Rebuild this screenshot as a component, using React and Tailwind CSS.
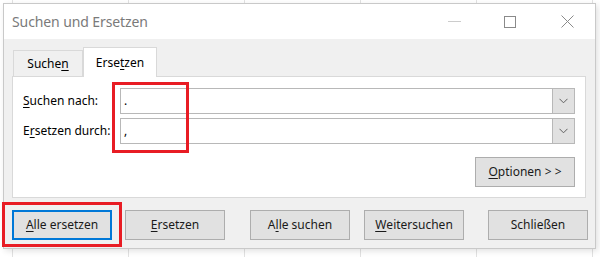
import React from 'react';

const font = { fontFamily: '"Segoe UI", "Noto Sans", "Open Sans", sans-serif' };

const U = ({ children }) => <span className="underline underline-offset-2">{children}</span>;

const Btn = ({ children, className = '' }) => (
    <button
        className={`h-[30px] w-[100px] bg-[#e1e1e1] border border-[#adadad] text-[12px] text-[#1a1a1a] flex items-center justify-center ${className}`}
    >
        {children}
    </button>
);

const Chevron = () => (
    <svg width="9" height="6" viewBox="0 0 9 6">
        <polyline points="0.5,0.8 4.5,4.8 8.5,0.8" fill="none" stroke="#606060" strokeWidth="1" />
    </svg>
);

const Combo = ({ value }) => (
    <div className="flex-1 h-full flex bg-white border border-[#b8b8b8]">
        <div className="flex-1 pl-[3px] text-[12px] leading-[24px] text-black">{value}</div>
        <div className="w-[22px] h-full bg-[#e1e1e1] border-l border-[#b8b8b8] flex items-center justify-center">
            <Chevron />
        </div>
    </div>
);

const App = () => {
    return (
        <div
            className="relative w-[600px] h-[257px] bg-white bg-[linear-gradient(90deg,#e2e2e2_1px,transparent_1px)] bg-[length:116px_100%] bg-[position:12px_0] pl-[3px] pt-[3px] overflow-hidden"
            style={font}
        >
            <div className="w-[593px] h-[246px] flex flex-col border border-[#c9c9c9] shadow-[2px_2px_6px_rgba(0,0,0,0.12)]">
                {/* title bar */}
                <div className="h-[35px] bg-white flex items-center">
                    <div className="pl-[8px] text-[14px] tracking-[-0.1px] text-[#7a7a7a] flex-1">Suchen und Ersetzen</div>
                    <div className="w-[13px] h-px bg-[#cccccc] mr-[43px]" />
                    <div className="w-[12px] h-[12px] border border-[#8a8a8a] mr-[45px]" />
                    <svg width="13" height="13" viewBox="0 0 13 13" className="mr-[21px]">
                        <path d="M0.5 0.5 L12.5 12.5 M12.5 0.5 L0.5 12.5" stroke="#8a8a8a" strokeWidth="1" />
                    </svg>
                </div>

                {/* body */}
                <div className="flex-1 bg-[#f0f0f0] pl-[8px] pt-[8px]">
                    <div className="flex items-end h-[29px] pl-[1px]">
                        <div className="w-[70px] h-[26px] border border-b-0 border-[#d9d9d9] flex items-center justify-center text-[12px] text-black">
                            Suche<U>n</U>
                        </div>
                        <div className="w-[74px] h-[30px] -mb-px bg-white border border-b-0 border-[#d9d9d9] flex items-center justify-center text-[12px] text-black relative z-10">
                            Erse<U>t</U>zen
                        </div>
                    </div>
                    <div className="w-[574px] h-[122px] bg-white border border-[#d9d9d9] pl-[10px] pr-[10px] pt-[11px] flex flex-col">
                        <div className="flex items-center h-[26px]">
                            <div className="w-[97px] text-[12px] text-black"><U>S</U>uchen nach:</div>
                            <Combo value="." />
                        </div>
                        <div className="flex items-center h-[26px] mt-[4px]">
                            <div className="w-[97px] text-[12px] text-black">E<U>r</U>setzen durch:</div>
                            <Combo value="," />
                        </div>
                        <div className="flex justify-end mt-[13px]">
                            <Btn className="h-[29px]"><U>O</U>ptionen &gt; &gt;</Btn>
                        </div>
                    </div>

                    <div className="flex mt-[12px]">
                        <button className="h-[30px] w-[100px] bg-[#e1e1e1] border-2 border-[#0078d7] text-[12px] text-[#1a1a1a] flex items-center justify-center">
                            <U>A</U>lle ersetzen
                        </button>
                        <Btn className="ml-[13px]"><U>E</U>rsetzen</Btn>
                        <Btn className="ml-[25px]">A<U>l</U>le suchen</Btn>
                        <Btn className="ml-[14px]"><U>W</U>eitersuchen</Btn>
                        <Btn className="ml-[24px]">Schließen</Btn>
                    </div>
                </div>
            </div>

            {/* annotation boxes */}
            <div className="absolute left-[112px] top-[82px] w-[77px] h-[71px] border-[3px] border-[#e81c24]" />
            <div className="absolute left-[2px] top-[202px] w-[120px] h-[45px] border-[3px] border-[#e81c24]" />
        </div>
    );
};

export default App;
